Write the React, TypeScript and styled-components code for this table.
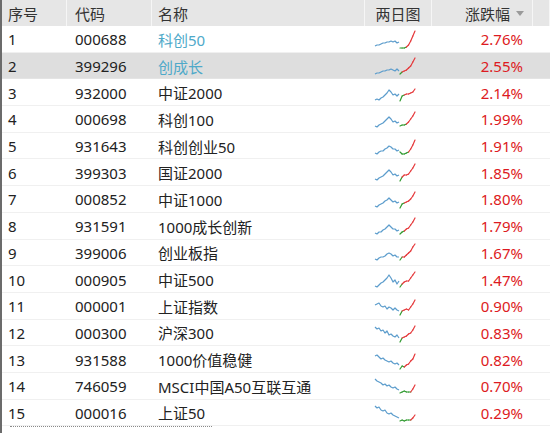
import React from "react";
import styled, { createGlobalStyle } from "styled-components";

const Global = createGlobalStyle`
  html, body { margin: 0; padding: 0; background: #ffffff; overflow: hidden; }
  body { font-family: "Noto Sans", "Noto Sans CJK SC", sans-serif; }
`;

const COLS = "65px 85px 213px 67px 101px 17px";

const Table = styled.div`
  width: 548px;
  height: 433px;
  border-left: 2px solid #6b6b6b;
  background: #fff;
  overflow: hidden;
  font-size: 15px;
  color: #222;
`;

const HeaderRow = styled.div`
  display: grid;
  grid-template-columns: ${COLS};
  height: 26px;
  background: #e6e6e6;
`;

const HeadCell = styled.div<{ $align?: "left" | "center" | "right"; $pad?: number }>`
  display: flex;
  align-items: center;
  justify-content: ${(p) => (p.$align === "center" ? "center" : p.$align === "right" ? "flex-end" : "flex-start")};
  padding-right: ${(p) => (p.$align === "right" ? 8 : 0)}px;
  padding-left: ${(p) => (p.$align === "left" || !p.$align ? p.$pad ?? 6 : 0)}px;
  border-right: 1px solid #f6f6f6;
  color: #333;
  gap: 6px;
`;

const SortArrow = styled.span`
  width: 0;
  height: 0;
  border-left: 4px solid transparent;
  border-right: 4px solid transparent;
  border-top: 5px solid #9a9a9a;
  margin-top: 1px;
`;

const Row = styled.div<{ $selected?: boolean }>`
  display: grid;
  grid-template-columns: ${COLS};
  height: 26.7px;
  background: ${(p) => (p.$selected ? "#dedede" : "#ffffff")};
  box-shadow: inset 0 -1px 0 ${(p) => (p.$selected ? "#e4e4e4" : "#f0f0f0")};
`;

const Cell = styled.div<{ $pad?: number; $color?: string; $right?: boolean }>`
  display: flex;
  align-items: center;
  justify-content: ${(p) => (p.$right ? "flex-end" : "flex-start")};
  padding-left: ${(p) => (p.$right ? 0 : p.$pad ?? 6)}px;
  padding-right: ${(p) => (p.$right ? 10 : 0)}px;
  color: ${(p) => p.$color ?? "#222"};
  white-space: nowrap;
  overflow: hidden;
`;

const ChartCell = styled.div`
  display: flex;
  align-items: center;
  padding-left: 9px;
`;

const FocusLine = styled.div`
  margin-left: 8px;
  width: 202px;
  height: 0;
  border-top: 1px dotted #8a8a8a;
`;

type Spark = { a: number[]; b: number[]; base: number };

const Sparkline: React.FC<Spark> = ({ a, b, base }) => {
  const ax = (i: number) => 1 + (i * 24) / (a.length - 1);
  const bx = (i: number) => 26 + (i * 15) / (b.length - 1);
  const blue = a.map((y, i) => `${ax(i).toFixed(1)},${y + 1}`).join(" ");
  const segs: React.ReactNode[] = [];
  for (let i = 0; i < b.length - 1; i++) {
    const mid = (b[i] + b[i + 1]) / 2;
    const col = mid > base ? "#2f9a2f" : "#e5393b";
    segs.push(
      <line
        key={i}
        x1={bx(i)}
        y1={b[i] + 1}
        x2={bx(i + 1)}
        y2={b[i + 1] + 1}
        stroke={col}
        strokeWidth={1.2}
        strokeLinecap="round"
      />
    );
  }
  return (
    <svg width="44" height="21" viewBox="0 0 44 21">
      <polyline points={blue} fill="none" stroke="#5b9ccc" strokeWidth={1.2} strokeLinejoin="round" />
      {segs}
    </svg>
  );
};

type Item = { code: string; name: string; pct: string; link?: boolean; spark: Spark };

const data: Item[] = [
  { code: "000688", name: "科创50", pct: "2.76%", link: true, spark: { a: [16, 15, 15, 14, 13, 13, 12, 12, 11, 12, 11, 13, 12], b: [18, 18, 18, 17, 15, 11, 6, 1], base: 16 } },
  { code: "399296", name: "创成长", pct: "2.55%", link: true, spark: { a: [17, 16, 16, 15, 14, 14, 13, 13, 12, 13, 14, 12, 14], b: [17, 15, 14, 13, 11, 9, 5, 1], base: 15 } },
  { code: "932000", name: "中证2000", pct: "2.14%", spark: { a: [17, 16, 17, 15, 14, 12, 10, 7, 9, 12, 11, 13, 11], b: [18, 13, 12, 11, 11, 10, 9, 6], base: 12 } },
  { code: "000698", name: "科创100", pct: "1.99%", spark: { a: [16, 17, 15, 14, 13, 11, 9, 7, 9, 12, 11, 13, 12], b: [16, 15, 15, 14, 12, 9, 6, 2], base: 13 } },
  { code: "931643", name: "科创创业50", pct: "1.91%", spark: { a: [16, 17, 15, 14, 14, 12, 11, 9, 10, 12, 12, 14, 13], b: [15, 17, 17, 16, 15, 12, 8, 3], base: 14 } },
  { code: "399303", name: "国证2000", pct: "1.85%", spark: { a: [16, 17, 15, 14, 13, 11, 9, 7, 9, 12, 11, 13, 12], b: [18, 14, 12, 12, 11, 8, 5, 1], base: 13 } },
  { code: "000852", name: "中证1000", pct: "1.80%", spark: { a: [16, 17, 15, 14, 13, 11, 10, 8, 10, 12, 11, 13, 12], b: [18, 14, 13, 12, 11, 9, 6, 2], base: 13 } },
  { code: "931591", name: "1000成长创新", pct: "1.79%", spark: { a: [16, 17, 15, 15, 13, 12, 10, 8, 10, 12, 12, 14, 13], b: [17, 15, 14, 12, 11, 8, 5, 1], base: 14 } },
  { code: "399006", name: "创业板指", pct: "1.67%", spark: { a: [16, 17, 15, 14, 14, 13, 11, 10, 11, 13, 12, 14, 14], b: [17, 14, 14, 12, 10, 8, 4, 1], base: 15 } },
  { code: "000905", name: "中证500", pct: "1.47%", spark: { a: [16, 17, 15, 13, 12, 10, 8, 5, 8, 12, 10, 14, 11], b: [17, 14, 12, 11, 11, 8, 5, 2], base: 13 } },
  { code: "000001", name: "上证指数", pct: "0.90%", spark: { a: [8, 7, 6, 9, 10, 9, 12, 10, 11, 13, 11, 13, 14], b: [18, 14, 13, 12, 13, 10, 7, 3], base: 15 } },
  { code: "000300", name: "沪深300", pct: "0.83%", spark: { a: [4, 6, 5, 8, 7, 10, 8, 12, 11, 13, 14, 12, 15], b: [19, 15, 14, 13, 11, 10, 7, 3], base: 16 } },
  { code: "931588", name: "1000价值稳健", pct: "0.82%", spark: { a: [6, 5, 7, 9, 8, 10, 11, 12, 11, 13, 14, 13, 15], b: [19, 16, 17, 15, 14, 11, 9, 4], base: 16 } },
  { code: "746059", name: "MSCI中国A50互联互通", pct: "0.70%", spark: { a: [2, 4, 5, 6, 8, 7, 9, 8, 10, 11, 10, 12, 13], b: [16, 15, 14, 15, 15, 15, 12, 8], base: 14 } },
  { code: "000016", name: "上证50", pct: "0.29%", spark: { a: [3, 5, 4, 7, 8, 7, 10, 11, 10, 12, 13, 14, 15], b: [18, 17, 18, 17, 17, 17, 15, 12], base: 16 } },
];

export default function App() {
  return (
    <>
      <Global />
      <Table>
        <HeaderRow>
          <HeadCell>序号</HeadCell>
          <HeadCell $pad={8}>代码</HeadCell>
          <HeadCell>名称</HeadCell>
          <HeadCell $align="center">两日图</HeadCell>
          <HeadCell $align="right">
            涨跌幅
            <SortArrow />
          </HeadCell>
          <HeadCell />
        </HeaderRow>
        {data.map((d, i) => (
          <Row key={d.code} $selected={i === 1}>
            <Cell>{i + 1}</Cell>
            <Cell $pad={8}>{d.code}</Cell>
            <Cell $color={d.link ? "#4ea9c9" : undefined}>{d.name}</Cell>
            <ChartCell>
              <Sparkline {...d.spark} />
            </ChartCell>
            <Cell $right $color="#dd1a22">
              {d.pct}
            </Cell>
            <Cell />
          </Row>
        ))}
        <FocusLine />
      </Table>
    </>
  );
}
